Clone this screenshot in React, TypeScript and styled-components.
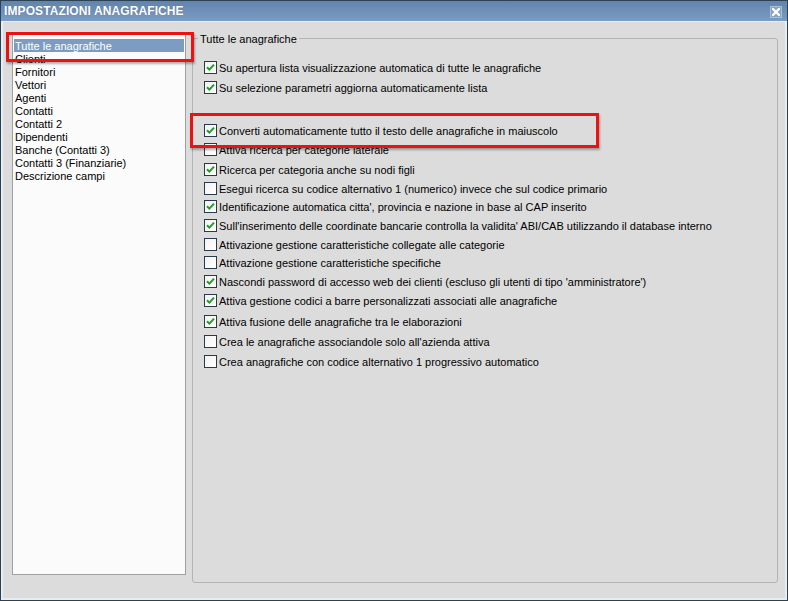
import React from "react";
import styled, { createGlobalStyle } from "styled-components";

const GlobalStyle = createGlobalStyle`
  html, body {
    margin: 0;
    padding: 0;
    background: #dcdcdc;
  }
  body {
    font-family: "Liberation Sans", Arial, sans-serif;
    font-size: 11px;
    color: #000;
  }
`;

const Window = styled.div`
  position: relative;
  width: 788px;
  height: 601px;
  box-sizing: border-box;
  border: 1px solid #2d4154;
  display: flex;
  flex-direction: column;
  overflow: hidden;
`;

const TitleBar = styled.div`
  height: 20px;
  flex: none;
  display: flex;
  align-items: center;
  justify-content: space-between;
  padding: 0 5px 0 3px;
  background: linear-gradient(#6283ab, #7b9cc3);
`;

const Title = styled.div`
  color: #fff;
  font-weight: bold;
  font-size: 12px;
  letter-spacing: 0.1px;
  text-shadow: 0 0 1px rgba(30, 50, 80, 0.4);
`;

const CloseButton = styled.div`
  width: 12px;
  height: 12px;
  box-sizing: border-box;
  border: 1px solid #a9bfd8;
  background: #86a5c9;
  display: flex;
  align-items: center;
  justify-content: center;
  margin-top: 1px;
`;

const Body = styled.div`
  flex: 1;
  display: flex;
  align-items: flex-start;
  gap: 6px;
  background: #dcdcdc;
  border: 2px solid #e8edf2;
  border-top-width: 1px;
  padding: 10px 0 0 9px;
`;

const ListPanel = styled.div`
  width: 174px;
  height: 543px;
  box-sizing: border-box;
  background: #fbfbfb;
  border: 1px solid #a0a0a0;
  padding: 6px 1px;
`;

const ListItem = styled.div<{ $selected?: boolean }>`
  height: 13px;
  line-height: 15px;
  padding-left: 1px;
  white-space: nowrap;
  background: ${(p) => (p.$selected ? "#7d9cc3" : "transparent")};
  color: ${(p) => (p.$selected ? "#fff" : "#000")};
`;

const Group = styled.fieldset`
  margin: -1px 0 0 0;
  width: 586px;
  height: 552px;
  box-sizing: border-box;
  border: 1px solid #b3b3b3;
  border-radius: 3px;
  padding: 12px 10px 0 11px;
  display: flex;
  flex-direction: column;
`;

const Legend = styled.legend`
  padding: 2px 2px 0;
  margin-left: -6px;
  line-height: 13px;
  font-size: 11px;
`;

const Row = styled.label<{ $mt?: number }>`
  display: flex;
  align-items: center;
  gap: 2px;
  height: 19px;
  margin-top: ${(p) => p.$mt || 0}px;
  white-space: nowrap;
`;

const Box = styled.span`
  width: 13px;
  height: 13px;
  box-sizing: border-box;
  border: 1px solid #2a3a4c;
  background: linear-gradient(135deg, #f2f2f2, #ffffff);
  display: flex;
  align-items: center;
  justify-content: center;
  flex: none;
`;

const Marker = styled.div<{ $x: number; $y: number; $w: number; $h: number }>`
  position: absolute;
  left: ${(p) => p.$x}px;
  top: ${(p) => p.$y}px;
  width: ${(p) => p.$w}px;
  height: ${(p) => p.$h}px;
  box-sizing: border-box;
  border: 3px solid #ee1111;
  box-shadow: 1px 2px 2px rgba(0, 0, 0, 0.3);
  pointer-events: none;
`;

const categories = [
  "Tutte le anagrafiche",
  "Clienti",
  "Fornitori",
  "Vettori",
  "Agenti",
  "Contatti",
  "Contatti 2",
  "Dipendenti",
  "Banche (Contatti 3)",
  "Contatti 3 (Finanziarie)",
  "Descrizione campi",
];

const options: { text: string; checked: boolean; mt?: number }[] = [
  { text: "Su apertura lista visualizzazione automatica di tutte le anagrafiche", checked: true },
  { text: "Su selezione parametri aggiorna automaticamente lista", checked: true, mt: 1 },
  { text: "Converti automaticamente tutto il testo delle anagrafiche in maiuscolo", checked: true, mt: 24 },
  { text: "Attiva ricerca per categorie laterale", checked: false },
  { text: "Ricerca per categoria anche su nodi figli", checked: true, mt: 1 },
  { text: "Esegui ricerca su codice alternativo 1 (numerico) invece che sul codice primario", checked: false },
  { text: "Identificazione automatica citta', provincia e nazione in base al CAP inserito", checked: true, mt: -1 },
  { text: "Sull'inserimento delle coordinate bancarie controlla la validita' ABI/CAB utilizzando il database interno", checked: true },
  { text: "Attivazione gestione caratteristiche collegate alle categorie", checked: false },
  { text: "Attivazione gestione caratteristiche specifiche", checked: false, mt: -1 },
  { text: "Nascondi password di accesso web dei clienti (escluso gli utenti di tipo 'amministratore')", checked: true },
  { text: "Attiva gestione codici a barre personalizzati associati alle anagrafiche", checked: true },
  { text: "Attiva fusione delle anagrafiche tra le elaborazioni", checked: true, mt: 2 },
  { text: "Crea le anagrafiche associandole solo all'azienda attiva", checked: false, mt: 1 },
  { text: "Crea anagrafiche con codice alternativo 1 progressivo automatico", checked: false, mt: 1 },
];

const CheckMark = () => (
  <svg width="9" height="9" viewBox="0 0 9 9">
    <path d="M1 4.2 L3.4 6.6 L8 1.6" fill="none" stroke="#1f9e24" strokeWidth="2" />
  </svg>
);

const CloseIcon = () => (
  <svg width="8" height="8" viewBox="0 0 8 8">
    <path d="M1 1 L7 7 M7 1 L1 7" stroke="#fff" strokeWidth="2.2" strokeLinecap="square" />
  </svg>
);

export default function App() {
  return (
    <>
      <GlobalStyle />
      <Window>
        <TitleBar>
          <Title>IMPOSTAZIONI ANAGRAFICHE</Title>
          <CloseButton>
            <CloseIcon />
          </CloseButton>
        </TitleBar>
        <Body>
          <ListPanel>
            {categories.map((c, i) => (
              <ListItem key={c} $selected={i === 0}>
                {c}
              </ListItem>
            ))}
          </ListPanel>
          <Group>
            <Legend>Tutte le anagrafiche</Legend>
            {options.map((o) => (
              <Row key={o.text} $mt={o.mt}>
                <Box>{o.checked ? <CheckMark /> : null}</Box>
                <span>{o.text}</span>
              </Row>
            ))}
          </Group>
        </Body>
        <Marker $x={5} $y={31} $w={188} $h={30} />
        <Marker $x={189} $y={112} $w={409} $h={35} />
      </Window>
    </>
  );
}
